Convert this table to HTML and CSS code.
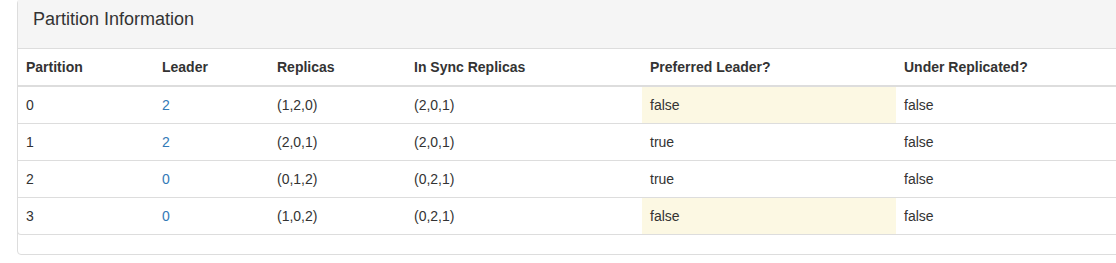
FILE: index.html
```html
<!DOCTYPE html>
<html>
<head>
<meta charset="utf-8">
<link rel="stylesheet" href="styles.css">
</head>
<body>
<div class="panel">
  <div class="panel-heading"><h3 class="panel-title">Partition Information</h3></div>
  <div class="table-box">
    <table class="table">
      <colgroup>
        <col class="c1"><col class="c2"><col class="c3"><col class="c4"><col class="c5"><col>
      </colgroup>
      <thead>
        <tr><th>Partition</th><th>Leader</th><th>Replicas</th><th>In Sync Replicas</th><th>Preferred Leader?</th><th>Under Replicated?</th></tr>
      </thead>
      <tbody>
        <tr><td>0</td><td><a href="#">2</a></td><td>(1,2,0)</td><td>(2,0,1)</td><td class="warning">false</td><td>false</td></tr>
        <tr><td>1</td><td><a href="#">2</a></td><td>(2,0,1)</td><td>(2,0,1)</td><td>true</td><td>false</td></tr>
        <tr><td>2</td><td><a href="#">0</a></td><td>(0,1,2)</td><td>(0,2,1)</td><td>true</td><td>false</td></tr>
        <tr><td>3</td><td><a href="#">0</a></td><td>(1,0,2)</td><td>(0,2,1)</td><td class="warning">false</td><td>false</td></tr>
      </tbody>
    </table>
  </div>
</div>
</body>
</html>
```

FILE: styles.css
```css
html, body {
  margin: 0;
  padding: 0;
  overflow: hidden;
  background: #fff;
}
body {
  font-family: "Liberation Sans", Arial, sans-serif;
  font-size: 14px;
  line-height: 20px;
  color: #333;
}
.panel {
  width: 1150px;
  margin: -1px 0 0 17px;
  border: 1px solid #ddd;
  border-radius: 4px;
  padding-bottom: 19px;
  background: #fff;
}
.panel-heading {
  background: #f5f5f5;
  border-bottom: 1px solid #ddd;
  padding: 9px 15px 19px;
}
.panel-title {
  margin: 0;
  font-size: 18px;
  font-weight: normal;
  line-height: 20px;
  color: #333;
}
.table-box {
  margin: 0 -1px;
  border: 1px solid #ddd;
  border-top: 0;
  border-radius: 0 0 4px 4px;
}
.table {
  width: 100%;
  border-collapse: collapse;
  table-layout: fixed;
}
.c1 { width: 136px; }
.c2 { width: 115px; }
.c3 { width: 137px; }
.c4 { width: 236px; }
.c5 { width: 254px; }
.table th,
.table td {
  padding: 8px;
  text-align: left;
  vertical-align: top;
  line-height: 20px;
}
.table th {
  font-weight: bold;
  border-bottom: 2px solid #ddd;
}
.table tbody tr + tr td {
  border-top: 1px solid #ddd;
}
.table td.warning {
  background: #fcf8e3;
}
.table a {
  color: #337ab7;
  text-decoration: none;
}
```
